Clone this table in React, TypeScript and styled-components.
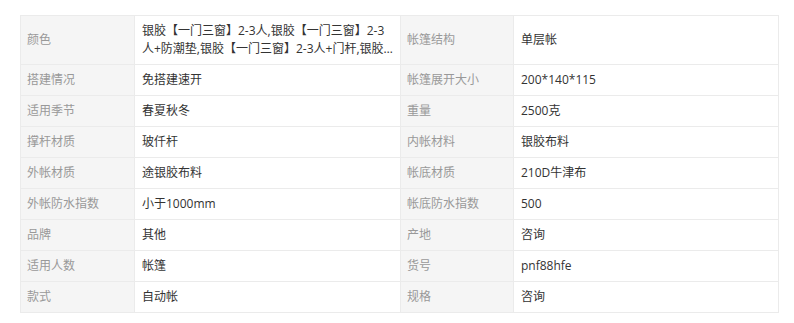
import React from "react";
import styled, { createGlobalStyle } from "styled-components";

const GlobalStyle = createGlobalStyle`
  body {
    margin: 0;
    background: #fff;
    font-family: "Open Sans", "Noto Sans CJK SC", sans-serif;
  }
`;

type Attr = { label: string; value: string };

const rows: [Attr, Attr][] = [
  [
    {
      label: "颜色",
      value:
        "银胶【一门三窗】2-3人,银胶【一门三窗】2-3人+防潮垫,银胶【一门三窗】2-3人+门杆,银胶【一门三窗】2-3人+防潮垫+门杆",
    },
    { label: "帐篷结构", value: "单层帐" },
  ],
  [
    { label: "搭建情况", value: "免搭建速开" },
    { label: "帐篷展开大小", value: "200*140*115" },
  ],
  [
    { label: "适用季节", value: "春夏秋冬" },
    { label: "重量", value: "2500克" },
  ],
  [
    { label: "撑杆材质", value: "玻仟杆" },
    { label: "内帐材料", value: "银胶布料" },
  ],
  [
    { label: "外帐材质", value: "途银胶布料" },
    { label: "帐底材质", value: "210D牛津布" },
  ],
  [
    { label: "外帐防水指数", value: "小于1000mm" },
    { label: "帐底防水指数", value: "500" },
  ],
  [
    { label: "品牌", value: "其他" },
    { label: "产地", value: "咨询" },
  ],
  [
    { label: "适用人数", value: "帐篷" },
    { label: "货号", value: "pnf88hfe" },
  ],
  [
    { label: "款式", value: "自动帐" },
    { label: "规格", value: "咨询" },
  ],
];

const App: React.FC = () => {
  return (
    <>
      <GlobalStyle />
      <Wrapper>
        <Table>
          <colgroup>
            <Col $w={114} />
            <Col $w={266} />
            <Col $w={113} />
            <Col $w={265} />
          </colgroup>
          <tbody>
            {rows.map((pair, i) => (
              <tr key={i}>
                {pair.map((a) => (
                  <React.Fragment key={a.label}>
                    <Label>{a.label}</Label>
                    <Value>
                      <Clamp>{a.value}</Clamp>
                    </Value>
                  </React.Fragment>
                ))}
              </tr>
            ))}
          </tbody>
        </Table>
      </Wrapper>
    </>
  );
};

export default App;

const Wrapper = styled.div`
  padding: 15px 16px 0 20px;
`;

const Table = styled.table`
  border-collapse: collapse;
  table-layout: fixed;
  width: 758px;
  font-size: 12px;
  line-height: 18px;
`;

const Col = styled.col<{ $w: number }>`
  width: ${(p) => p.$w}px;
`;

const Label = styled.td`
  background: #f5f5f5;
  color: #999;
  border: 1px solid #ebebeb;
  padding: 6px 6px;
  vertical-align: middle;
`;

const Value = styled.td`
  background: #fff;
  color: #333;
  border: 1px solid #ebebeb;
  padding: 6px 7px;
  vertical-align: middle;
`;

const Clamp = styled.div`
  display: -webkit-box;
  -webkit-box-orient: vertical;
  -webkit-line-clamp: 2;
  overflow: hidden;
  word-break: break-all;
`;
